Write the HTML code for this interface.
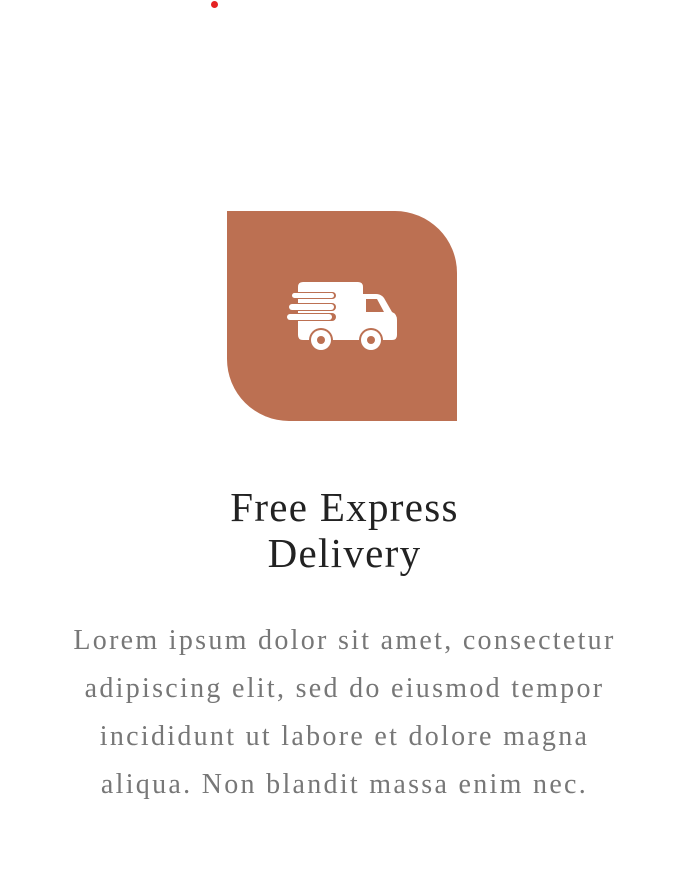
<!DOCTYPE html>
<html><head><style>
body{margin:0;width:689px;height:882px;background:#fff;position:relative;overflow:hidden}
.dot{position:absolute;left:211px;top:1px;width:7px;height:7px;border-radius:50%;background:#e52222}
.box{position:absolute;left:227px;top:211px;width:230px;height:210px;background:#bc7052;border-radius:0 62px 0 62px}
h2{position:absolute;top:484px;left:0;width:689px;margin:0;text-align:center;font:400 41px/46px "Liberation Serif",serif;letter-spacing:1.3px;color:#222}
p{position:absolute;top:617px;left:0;width:689px;margin:0;text-align:center;font:400 28px/48px "Liberation Serif",serif;letter-spacing:2.3px;color:#777;white-space:nowrap}
</style></head><body>
<div class="dot"></div>
<div class="box"></div>
<svg style="position:absolute;left:0;top:0" width="689" height="882">
<g fill="#fff">
<path d="M303 282 H358 Q363 282 363 287 V294 H376 Q381 294 384 298 L392 312 Q397 314 397 320 V335 Q397 340 392 340 H303 Q298 340 298 335 V287 Q298 282 303 282Z"/>
<path d="M366 299 H377 L384 312 H366Z" fill="#bc7052"/>
<rect x="288" y="292" width="48" height="7" rx="3.5" fill="#bc7052"/>
<rect x="292" y="293" width="42" height="5" rx="2.5"/>
<rect x="286" y="303" width="50" height="8" rx="4" fill="#bc7052"/>
<rect x="289" y="304" width="45" height="6" rx="3"/>
<rect x="284" y="313" width="52" height="8" rx="4" fill="#bc7052"/>
<rect x="287" y="314" width="45" height="6" rx="3"/>
<circle cx="321" cy="340" r="12" fill="#bc7052"/><circle cx="321" cy="340" r="10"/><circle cx="321" cy="340" r="4" fill="#bc7052"/>
<circle cx="371" cy="340" r="12" fill="#bc7052"/><circle cx="371" cy="340" r="10"/><circle cx="371" cy="340" r="4" fill="#bc7052"/>
</g></svg>
<h2>Free Express<br>Delivery</h2>
<p>Lorem ipsum dolor sit amet, consectetur<br>adipiscing elit, sed do eiusmod tempor<br>incididunt ut labore et dolore magna<br>aliqua. Non blandit massa enim nec.</p>
</body></html>
